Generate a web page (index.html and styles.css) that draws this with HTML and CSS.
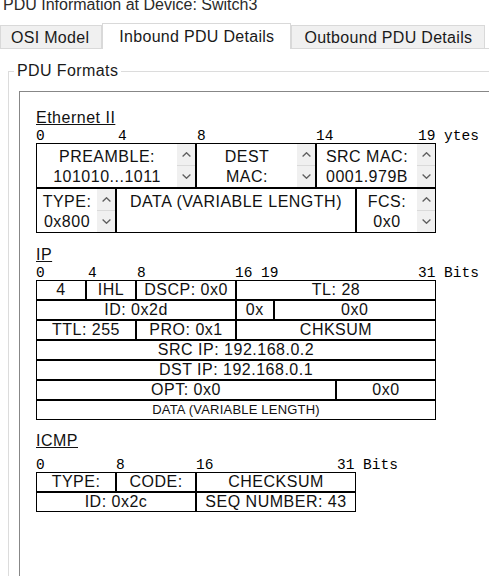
FILE: index.html
```html
<!DOCTYPE html>
<html lang="en">
<head>
<meta charset="utf-8">
<title>PDU Information at Device: Switch3</title>
<link rel="stylesheet" href="styles.css">
</head>
<body>
<div class="title">PDU Information at Device: Switch3</div>
<div class="tabs">
  <div class="tab tab-first">OSI Model</div>
  <div class="tab tab-active">Inbound PDU Details</div>
  <div class="tab">Outbound PDU Details</div>
</div>
<fieldset class="group">
  <legend>PDU Formats</legend>
  <div class="panel">

    <section class="pdu">
      <div class="pdu-name">Ethernet II</div>
      <div class="bits">
        <span style="width:82px">0</span><span style="width:79px">4</span><span style="width:119px">8</span><span style="width:102px">14</span><span>19 ytes</span>
      </div>
      <div class="eth">
        <div class="ecell span-8">
          <div class="etext">PREAMBLE:<br>101010...1011</div>
          <div class="sb"><span class="sb-btn"><svg width="9" height="5" viewBox="0 0 9 5"><polyline points="0.6,4.5 4.5,0.7 8.4,4.5"/></svg></span><span class="sb-btn"><svg width="9" height="5" viewBox="0 0 9 5"><polyline points="0.6,0.5 4.5,4.3 8.4,0.5"/></svg></span></div>
        </div>
        <div class="ecell span-6">
          <div class="etext">DEST<br>MAC:</div>
          <div class="sb"><span class="sb-btn"><svg width="9" height="5" viewBox="0 0 9 5"><polyline points="0.6,4.5 4.5,0.7 8.4,4.5"/></svg></span><span class="sb-btn"><svg width="9" height="5" viewBox="0 0 9 5"><polyline points="0.6,0.5 4.5,4.3 8.4,0.5"/></svg></span></div>
        </div>
        <div class="ecell span-6">
          <div class="etext">SRC MAC:<br>0001.979B</div>
          <div class="sb"><span class="sb-btn"><svg width="9" height="5" viewBox="0 0 9 5"><polyline points="0.6,4.5 4.5,0.7 8.4,4.5"/></svg></span><span class="sb-btn"><svg width="9" height="5" viewBox="0 0 9 5"><polyline points="0.6,0.5 4.5,4.3 8.4,0.5"/></svg></span></div>
        </div>
        <div class="ecell span-4">
          <div class="etext">TYPE:<br>0x800</div>
          <div class="sb"><span class="sb-btn"><svg width="9" height="5" viewBox="0 0 9 5"><polyline points="0.6,4.5 4.5,0.7 8.4,4.5"/></svg></span><span class="sb-btn"><svg width="9" height="5" viewBox="0 0 9 5"><polyline points="0.6,0.5 4.5,4.3 8.4,0.5"/></svg></span></div>
        </div>
        <div class="ecell span-12">
          <div class="etext">DATA (VARIABLE LENGTH)</div>
        </div>
        <div class="ecell span-4">
          <div class="etext">FCS:<br>0x0</div>
          <div class="sb"><span class="sb-btn"><svg width="9" height="5" viewBox="0 0 9 5"><polyline points="0.6,4.5 4.5,0.7 8.4,4.5"/></svg></span><span class="sb-btn"><svg width="9" height="5" viewBox="0 0 9 5"><polyline points="0.6,0.5 4.5,4.3 8.4,0.5"/></svg></span></div>
        </div>
      </div>
    </section>

    <section class="pdu pdu-ip">
      <div class="pdu-name">IP</div>
      <div class="bits">
        <span style="width:52px">0</span><span style="width:49px">4</span><span style="width:98px">8</span><span style="width:183px">16 19</span><span>31 Bits</span>
      </div>
      <div class="ip">
        <div class="cell span-4">4</div>
        <div class="cell span-4">IHL</div>
        <div class="cell span-8">DSCP: 0x0</div>
        <div class="cell span-16">TL: 28</div>
        <div class="cell span-16">ID: 0x2d</div>
        <div class="cell span-3">0x</div>
        <div class="cell span-13">0x0</div>
        <div class="cell span-8">TTL: 255</div>
        <div class="cell span-8">PRO: 0x1</div>
        <div class="cell span-16">CHKSUM</div>
        <div class="cell span-32">SRC IP: 192.168.0.2</div>
        <div class="cell span-32">DST IP: 192.168.0.1</div>
        <div class="cell span-24">OPT: 0x0</div>
        <div class="cell span-8">0x0</div>
        <div class="cell span-32 cell-small">DATA (VARIABLE LENGTH)</div>
      </div>
    </section>

    <section class="pdu pdu-icmp">
      <div class="pdu-name">ICMP</div>
      <div class="bits">
        <span style="width:80px">0</span><span style="width:80px">8</span><span style="width:141px">16</span><span>31 Bits</span>
      </div>
      <div class="icmp">
        <div class="cell span-8">TYPE:</div>
        <div class="cell span-8">CODE:</div>
        <div class="cell span-16">CHECKSUM</div>
        <div class="cell span-16">ID: 0x2c</div>
        <div class="cell span-16">SEQ NUMBER: 43</div>
      </div>
    </section>

  </div>
</fieldset>
</body>
</html>
```
FILE: styles.css
```css
html, body {
  margin: 0;
  padding: 0;
  overflow: hidden;
  background: #ffffff;
}

body {
  font-family: "Liberation Sans", Arial, sans-serif;
  font-size: 16px;
  color: #111111;
}

.title {
  padding-left: 3px;
  line-height: 10px;
  height: 10px;
  color: #2a2a2a;
  white-space: nowrap;
}

/* ---------- tabs ---------- */
.tabs {
  margin-top: 13px;
  display: flex;
  align-items: flex-end;
  border-bottom: 1px solid #d9d9d9;
}

.tab {
  box-sizing: border-box;
  height: 23px;
  padding: 1px 12px 0 12px;
  line-height: 21px;
  letter-spacing: 0.3px;
  white-space: nowrap;
  background: #f0f0f0;
  border: 1px solid #d9d9d9;
  border-bottom: 0;
  color: #1a1a1a;
}

.tab-first {
  padding-left: 10px;
}

.tab-active {
  height: 26px;
  margin-bottom: -1px;
  padding: 0 16px;
  line-height: 25px;
  background: #ffffff;
}

/* ---------- group box ---------- */
.group {
  margin: 13px 0 0 8px;
  padding: 11px 0 0 5px;
  border: 1px solid #dcdcdc;
  border-right: 0;
  border-bottom: 0;
  min-width: 0;
}

.group legend {
  padding: 0 3px;
  line-height: 18px;
  letter-spacing: 0.4px;
  color: #1a1a1a;
}

.panel {
  margin-left: 5px;
  border-top: 1px solid #878787;
  border-left: 1px solid #878787;
  padding: 17px 0 0 16px;
  min-height: 467px;
}

/* ---------- pdu sections ---------- */
.pdu-ip {
  margin-top: 13px;
}

.pdu-icmp {
  margin-top: 12px;
}

.pdu-name {
  line-height: 18px;
  letter-spacing: 0.5px;
  text-decoration: underline;
  margin-bottom: 3px;
}

.pdu-icmp .pdu-name {
  margin-bottom: 9px;
}

.bits {
  display: flex;
  height: 13px;
  font-family: "Liberation Mono", "Courier New", monospace;
  font-size: 14.5px;
  line-height: 13px;
  color: #000000;
  white-space: pre;
}

.bits span {
  flex: none;
}

/* ---------- grids ---------- */
.eth {
  display: grid;
  width: 400px;
  grid-template-columns: repeat(20, 1fr);
  grid-auto-rows: 45px;
}

.ip {
  display: grid;
  width: 400px;
  grid-template-columns: repeat(32, 1fr);
  grid-auto-rows: 20px;
}

.icmp {
  display: grid;
  width: 320px;
  grid-template-columns: repeat(32, 1fr);
  grid-auto-rows: 20px;
}

.span-3 { grid-column: span 3; }
.span-4 { grid-column: span 4; }
.span-6 { grid-column: span 6; }
.span-8 { grid-column: span 8; }
.span-12 { grid-column: span 12; }
.span-13 { grid-column: span 13; }
.span-16 { grid-column: span 16; }
.span-24 { grid-column: span 24; }
.span-32 { grid-column: span 32; }

.ecell {
  box-sizing: border-box;
  border: 1px solid #000000;
  display: flex;
  min-width: 0;
}

.etext {
  flex: 1;
  min-width: 0;
  padding-top: 3px;
  line-height: 20px;
  letter-spacing: 0.5px;
  text-align: center;
  white-space: nowrap;
  overflow: hidden;
  color: #111111;
}

.sb {
  flex: none;
  width: 18px;
  background: #f0f0f0;
  display: flex;
  flex-direction: column;
}

.sb-btn {
  flex: 1;
  display: flex;
  align-items: center;
  justify-content: center;
}

.sb-btn + .sb-btn {
  border-top: 1px solid #dadada;
}

.sb-btn svg {
  display: block;
}

.sb-btn polyline {
  fill: none;
  stroke: #5f5f5f;
  stroke-width: 1.3;
}

.cell {
  box-sizing: border-box;
  border: 1px solid #000000;
  display: flex;
  align-items: center;
  justify-content: center;
  line-height: 18px;
  letter-spacing: 0.5px;
  white-space: nowrap;
  overflow: hidden;
  min-width: 0;
  color: #111111;
}

.cell-small {
  font-size: 13px;
  letter-spacing: 0.2px;
}
```
